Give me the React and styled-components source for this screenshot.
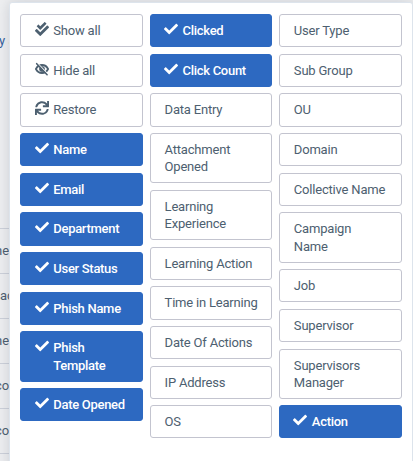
import React from "react";
import styled, { createGlobalStyle, css } from "styled-components";
import { FaCheckDouble, FaSync, FaCheck } from "react-icons/fa";

const GlobalStyle = createGlobalStyle`
  * { box-sizing: border-box; }
  body { margin: 0; background: #ecedef; overflow: hidden; font-family: Roboto, "Open Sans", sans-serif; }
`;

const Screen = styled.main`
  position: relative;
  width: 413px;
  height: 461px;
  overflow: hidden;
  background: #eeeff1;
`;

const Backdrop = styled.div`
  width: 40px;
  padding-top: 26px;
  font-size: 13px;
  line-height: 30px;
  color: #4c5e70;
`;

const TopText = styled.div`
  height: 203px;
  border-bottom: 1px solid #cdd1da;
  color: #34609c;
  text-indent: -1px;
  span { color: #e8a85c; }
`;

const TableCell = styled.div`
  height: 45px;
  padding-top: 7px;
  border-bottom: 1px solid #cdd1da;
  white-space: nowrap;
  text-indent: ${(p) => p.$shift}px;
`;

const Menu = styled.section`
  position: absolute;
  top: 2px;
  left: 9px;
  width: 404px;
  height: 480px;
  padding: 11.1px 0 0 10.3px;
  background: #fff;
  border: 1px solid #dde4ec;
  border-radius: 3px;
  box-shadow: 0 0 14px rgba(60, 70, 90, 0.2);
  display: flex;
  gap: 6.6px;
  align-items: flex-start;
`;

const Column = styled.div`
  display: flex;
  flex-direction: column;
  gap: 6.5px;
  width: 122.7px;
  flex: none;
`;

const ToggleButton = styled.button`
  display: flex;
  align-items: flex-start;
  width: 100%;
  margin: 0;
  padding: 7px 14px;
  border: 1px solid #c3c4cf;
  border-radius: 3px;
  background: #fff;
  color: #4d6070;
  font: 400 13px/17.15px Roboto, sans-serif;
  letter-spacing: -0.2px;
  text-align: left;
  white-space: ${(p) => (p.$singleLine ? "nowrap" : "normal")};
  ${(p) =>
    p.$selected &&
    css`
      background: #2d69c1;
      border-color: #2d69c1;
      color: #fff;
      font-weight: 500;
      letter-spacing: -0.3px;
    `}
  svg {
    flex: none;
    width: 14px;
    height: 14px;
    margin: 0 4.5px 0 -0.5px;
  }
`;

function EyeSlash() {
  return (
    <svg viewBox="0 0 14 14" fill="none" stroke="currentColor">
      <path d="M0.9 7C2.2 4.4 4.4 3 7 3s4.8 1.4 6.1 4C11.8 9.6 9.6 11 7 11S2.2 9.6 0.9 7Z" strokeWidth="1.8" />
      <circle cx="7" cy="7" r="2.5" fill="currentColor" strokeWidth="0.8" />
      <path d="M2.7 1.3 12.6 11.9" stroke="#fff" strokeWidth="1.2" />
      <path d="M1.7 1.7 12.1 12.7" strokeWidth="1.6" strokeLinecap="round" />
    </svg>
  );
}

const columns = [
  [
    { label: "Show all", icon: FaCheckDouble },
    { label: "Hide all", icon: EyeSlash },
    { label: "Restore", icon: FaSync },
    { label: "Name", on: true },
    { label: "Email", on: true },
    { label: "Department", on: true },
    { label: "User Status", on: true },
    { label: "Phish Name", on: true },
    { label: "Phish Template", on: true },
    { label: "Date Opened", on: true },
  ],
  [
    { label: "Clicked", on: true },
    { label: "Click Count", on: true },
    { label: "Data Entry" },
    { label: "Attachment Opened" },
    { label: "Learning Experience" },
    { label: "Learning Action" },
    { label: "Time in Learning", singleLine: true },
    { label: "Date Of Actions" },
    { label: "IP Address" },
    { label: "OS" },
  ],
  [
    { label: "User Type" },
    { label: "Sub Group" },
    { label: "OU" },
    { label: "Domain" },
    { label: "Collective Name" },
    { label: "Campaign Name" },
    { label: "Job" },
    { label: "Supervisor" },
    { label: "Supervisors Manager" },
    { label: "Action", on: true },
  ],
];

export default function App() {
  return (
    <Screen>
      <GlobalStyle />
      <Backdrop>
        <TopText>y <span>a</span></TopText>
        <TableCell $shift={-5}>ne</TableCell>
        <TableCell $shift={0}>ac</TableCell>
        <TableCell $shift={-5}>ne</TableCell>
        <TableCell $shift={-5}>co</TableCell>
        <TableCell $shift={-5}>co</TableCell>
      </Backdrop>
      <Menu>
        {columns.map((items, i) => (
          <Column key={i}>
            {items.map(({ label, icon, on, singleLine }) => {
              const Icon = icon || (on ? FaCheck : null);
              return (
                <ToggleButton key={label} $selected={on} $singleLine={singleLine}>
                  {Icon && <Icon />}
                  <span>{label}</span>
                </ToggleButton>
              );
            })}
          </Column>
        ))}
      </Menu>
    </Screen>
  );
}
